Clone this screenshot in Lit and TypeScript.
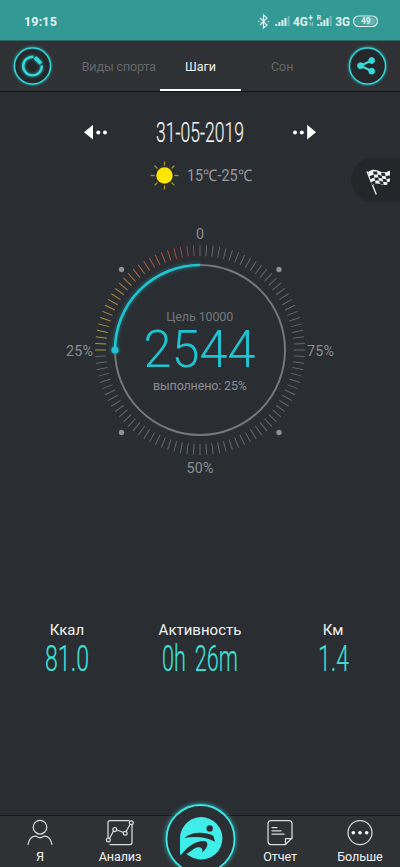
import { LitElement, html, svg, css } from "lit";
import { customElement, property } from "lit/decorators.js";

const TICKS = 100;
const DONE = 25;

function tickColor(i: number): string {
  if (i === 0 || i > DONE) return "#63676c";
  const stops = [[158, 62, 64], [172, 98, 62], [176, 138, 62], [154, 162, 60]];
  const t = ((i - 1) / (DONE - 1)) * 3;
  const k = Math.min(2, Math.floor(t));
  const c = stops[k].map((v, j) => Math.round(v + (stops[k + 1][j] - v) * (t - k)));
  return `rgb(${c.join(",")})`;
}

/* Narrow numerals squeezed to a given width. */
@customElement("slim-text")
class SlimText extends LitElement {
  @property() text = "";
  @property({ type: Number }) width = 80;
  @property({ type: Number }) size = 27;
  @property({ type: Number }) gap = 0;
  static styles = css`
    :host { display: block; }
    svg { display: block; overflow: visible; }
    text { font-family: Roboto, sans-serif; font-weight: 300; fill: currentColor; stroke: currentColor; stroke-width: 0.2; }
  `;
  render() {
    const h = Math.round(this.size * 0.711);
    return html`<svg width=${this.width} height=${h}>
      <text x="0" y=${h} font-size=${this.size} word-spacing=${this.gap} textLength=${this.width} lengthAdjust="spacingAndGlyphs">${this.text}</text>
    </svg>`;
  }
}

@customElement("step-gauge")
class StepGauge extends LitElement {
  static styles = css`
    :host { display: block; width: 280px; height: 260px; }
    svg { display: block; overflow: visible; }
    text { font-family: Roboto, sans-serif; text-anchor: middle; fill: #8b8e91; }
    .mark { font-size: 14.3px; }
    .small { font-size: 12.5px; }
    .goal { fill: #75787b; }
    .big { font-size: 51.5px; font-weight: 300; fill: #20c4d0; }
    .glow { filter: drop-shadow(0 0 2px #17858d); }
  `;
  render() {
    return html`<svg width="280" height="260" viewBox="60 220 280 260">
      ${Array.from({ length: TICKS }, (_, i) => svg`<line x1="200" x2="200" y1="245" y2="256"
        stroke=${tickColor(i)} stroke-width="1" transform="rotate(${-i * 3.6} 200 350)"/>`)}
      ${[[121.5, 269.5], [279, 269.5], [121.5, 432.5], [279, 432.5]].map(
        ([x, y]) => svg`<circle cx=${x} cy=${y} r="2.7" fill="#8d8f92"/>`)}
      <circle cx="200" cy="350" r="85" fill="none" stroke="#74777b" stroke-width="2"/>
      <g class="glow">
        <path d="M200 265A85 85 0 0 0 115 350" fill="none" stroke="#20c4d0" stroke-width="2.6"/>
        <circle cx="115" cy="350" r="3.6" fill="#20c4d0"/>
      </g>
      <text class="mark" x="200" y="239">0</text>
      <text class="mark" x="79.5" y="356.3" textLength="27">25%</text>
      <text class="mark" x="320.5" y="356.3" textLength="27">75%</text>
      <text class="mark" x="200" y="473" textLength="27">50%</text>
      <text class="small goal" x="199.8" y="321" textLength="67">Цель 10000</text>
      <text class="big" x="199.5" y="367" textLength="112" lengthAdjust="spacingAndGlyphs">2544</text>
      <text class="small" x="200" y="390" textLength="94">выполнено: 25%</text>
    </svg>`;
  }
}

@customElement("app-root")
class AppRoot extends LitElement {
  static styles = css`
    :host { display: flex; flex-direction: column; width: 400px; height: 867px; background: #2a2d31; overflow: hidden;
      font-family: Roboto, sans-serif; color: #f2f3f3; }
    svg { display: block; overflow: visible; }
    .status { height: 40px; flex: none; background: #329995; border-bottom: 1px solid #2a6667; display: flex;
      justify-content: space-between; box-sizing: content-box; }
    .clock { margin: 14px 0 0 24px; font-size: 12.5px; line-height: 16px; font-weight: 700; letter-spacing: 0.15px; color: #e6f5f4; }
    .signals text { font-weight: 700; fill: #e0f3f2; }
    .header { height: 50px; flex: none; background: #2f3135; border-bottom: 1px solid #101214; display: flex;
      justify-content: space-between; padding: 0 13px; position: relative; }
    .round { margin-top: 6px; width: 38px; height: 38px; }
    .halo { filter: drop-shadow(0 0 1.5px #20b8ba); }
    .tabs { display: flex; width: 246px; margin-left: 14px; margin-right: 14px; }
    .tab { flex: 1; height: 48px; line-height: 51px; text-align: center; font-size: 12.5px; color: #63666a; border-bottom: 2px solid transparent; white-space: nowrap; }
    .tab.first { padding-left: 1px; letter-spacing: -0.1px; }
    .tab.on { color: #f1f1f1; border-color: #fff; }
    .main { flex: 1; display: flex; flex-direction: column; align-items: center; position: relative; }
    .date { margin-top: 30px; height: 20px; width: 232px; display: flex; align-items: center; justify-content: space-between; }
    .weather { margin-top: 18px; height: 30px; display: flex; align-items: center; gap: 8px; width: 102px; margin-left: 2px; white-space: nowrap; }
    .flag { position: absolute; right: 0; top: 66px; width: 49px; height: 44px; border-radius: 22px 0 0 22px; background: #242629; }
    step-gauge { margin-top: 30px; }
    .metrics { width: 400px; margin-top: 140px; display: grid; grid-template-columns: 134px 132px 134px; }
    .metric { display: flex; flex-direction: column; align-items: center; font-size: 15px; line-height: 20px; }
    .metric slim-text { margin-top: 5px; color: #3be3dc; }
    .nav { height: 51px; flex: none; border-top: 1px solid #15171a; background: #2f3135; display: grid; grid-template-columns: repeat(5, 1fr); position: relative; }
    .item { display: flex; flex-direction: column; align-items: center; font-size: 12.6px; line-height: 16px; padding-top: 3px; white-space: nowrap; }
    .item span { margin-top: 2px; letter-spacing: -0.1px; }
    .center { position: absolute; left: 164px; top: -13px; }
    .ring { filter: drop-shadow(0 0 2.5px #28b4b3); }
  `;

  private item(icon: unknown, label: string) {
    return html`<div class="item"><svg width="28" height="28" viewBox="0 0 28 28" fill="none" stroke="#d9dadb" stroke-width="1.25" stroke-linecap="round" stroke-linejoin="round">${icon}</svg><span>${label}</span></div>`;
  }

  private metric(label: string, value: string, width: number) {
    return html`<div class="metric">${label}<slim-text .text=${value} .width=${width} .size=${36.3} .gap=${6}></slim-text></div>`;
  }

  render() {
    const flagCells: unknown[] = [];
    for (let r = 0; r < 4; r++)
      for (let c = 0; c < 5; c++)
        if ((r + c) % 2 === 1) {
          const y = (k: number) => 14.2 + r * 3 + [1, -0.8, -0.8, 0.6, 1, 0][k];
          const x = 18 + c * 4 + r * 0.7;
          flagCells.push(svg`<path d="M${x} ${y(c)}L${x + 4} ${y(c + 1)}L${x + 4.5} ${y(c + 1) + 3}L${x + 0.7} ${y(c) + 3}Z" fill="#242629"/>`);
        }
    return html`
      <div class="status">
        <div class="clock">19:15</div>
        <svg class="signals" width="142" height="40" viewBox="258 0 142 40">
          <path d="M260 18L267 25L263.5 28V15L267 18L260 25" fill="none" stroke="#e0f3f2" stroke-width="1.2"/>
          <circle cx="258.8" cy="21.5" r=".8" fill="#e0f3f2"/><circle cx="268.4" cy="21.5" r=".8" fill="#e0f3f2"/>
          ${[0, 1, 2, 3, 4].map((i) => svg`
            <rect x=${275.3 + i * 3.05} y=${24 - i * 2} width="2.1" height=${2 + i * 2} fill="#e0f3f2" opacity=${i > 3 ? 0.35 : 0.95}/>
            <rect x=${317.3 + i * 3.05} y=${24 - i * 2} width="2.1" height=${2 + i * 2} fill="#e0f3f2" opacity=${i > 3 ? 0.35 : 0.95}/>`)}
          <text x="293" y="25.8" font-size="12" textLength="14.8" lengthAdjust="spacingAndGlyphs">4G</text>
          <text x="308.3" y="21" font-size="8.5">+</text>
          <path d="M310.2 22v4M312.3 22v4" stroke="#b2dedb" stroke-width=".8"/>
          <text x="316.7" y="20" font-size="6.8">R</text>
          <text x="335.3" y="25.8" font-size="12" textLength="14.8" lengthAdjust="spacingAndGlyphs">3G</text>
          <rect x="353.5" y="16" width="24" height="10.5" rx="5.25" fill="none" stroke="#e0f3f2" stroke-width="1.2"/>
          <path d="M366 17.5h6a3.7 3.7 0 0 1 0 7.4h-6z" fill="#68b6b3"/><rect x="355" y="17.5" width="12" height="7.5" rx="3.7" fill="#46a29f"/>
          <text x="361" y="24.4" font-size="8.6" textLength="9.7" lengthAdjust="spacingAndGlyphs">49</text>
        </svg>
      </div>
      <div class="header">
        <svg class="round" viewBox="0 0 38 38">
          <circle class="halo" cx="19.5" cy="19" r="18" fill="#25282b" stroke="#31d3d4" stroke-width="1.5"/>
          <g class="halo" fill="none" stroke="#36dad9"><path d="M20.5 9.8A9.3 9.3 0 1 0 28.8 18.5" stroke-width="2.3"/>
          <path d="M22 10.5L28 16.5" stroke-width="3.8"/></g>
        </svg>
        <div class="tabs"><div class="tab first">Виды спорта</div><div class="tab on">Шаги</div><div class="tab">Сон</div></div>
        <svg class="round" viewBox="0 0 38 38">
          <circle class="halo" cx="18.5" cy="19" r="18" fill="#25282b" stroke="#31d3d4" stroke-width="1.5"/>
          <g fill="#36dad9" stroke="#36dad9"><path d="M22.7 13.5L11.5 18.7L22.7 24" fill="none" stroke-width="2.2"/>
          <circle cx="22.7" cy="13.5" r="2.9"/><circle cx="11.5" cy="18.7" r="2.9"/><circle cx="22.7" cy="24.2" r="2.9"/></g>
        </svg>
      </div>
      <div class="main">
        <div class="date">
          <svg width="24" height="16" viewBox="0 0 24 16" fill="#fff"><path d="M0 8.2L9 .8V15.6Z"/><circle cx="14.3" cy="8.4" r="2"/><circle cx="21" cy="8.4" r="2"/></svg>
          <slim-text .text=${"31-05-2019"} .width=${88} .size=${27.3}></slim-text>
          <svg width="24" height="16" viewBox="0 0 24 16" fill="#fff"><path d="M24 8.2L15.2 .8V15.6Z"/><circle cx="3" cy="8.4" r="2"/><circle cx="9.8" cy="8.4" r="2"/></svg>
        </div>
        <div class="weather">
          <svg width="29" height="29" viewBox="-14.5 -14.5 29 29">
            <circle r="8.2" fill="#ffe600"/>
            ${Array.from({ length: 8 }, (_, i) => svg`<path d="M0-14V-10" stroke="#a39826" stroke-width="1.3" transform="rotate(${i * 45})"/>`)}
          </svg>
          <svg width="65" height="18"><text x="0" y="14.8" font-size="16" fill="#96999c" textLength="65" lengthAdjust="spacingAndGlyphs">15℃-25℃</text></svg>
        </div>
        <svg class="flag" viewBox="0 0 49 44">
          <path d="M16 13.5L25.3 36.5" stroke="#f3f3f3" stroke-width="1.3"/>
          <path d="M17 14C22 10.5 25 12 29 13.5S35 14.5 39 12.5V25C35 28 32 27 29 26S24 25 21.5 27.5Z" fill="#f3f3f3"/>
          ${flagCells}
        </svg>
        <step-gauge></step-gauge>
        <div class="metrics">
          ${this.metric("Ккал", "81.0", 44)}${this.metric("Активность", "0h 26m", 76)}${this.metric("Км", "1.4", 31)}
        </div>
      </div>
      <div class="nav">
        ${this.item(svg`<circle cx="14" cy="8.2" r="6.8"/><path d="M2 25.5C3 20.5 6 17.2 9.5 17.2C11.5 17.2 11.8 18.7 14 18.7S16.5 17.2 18.5 17.2C22 17.2 25 20.5 26 25.5"/>`, "Я")}
        ${this.item(svg`<path d="M23 1.5H4A2 2 0 0 0 2 3.5V19M4 25.5H24A2 2 0 0 0 26 23.5V6M3.5 19.5L7.5 12M11 11L17.5 13.5M20.3 12.3L24 5.5"/><circle cx="2.3" cy="21" r="1.9"/><circle cx="8.8" cy="10.6" r="1.9"/><circle cx="19.2" cy="14.2" r="1.9"/><circle cx="25.3" cy="3.8" r="1.9"/>`, "Анализ")}
        <div></div>
        ${this.item(svg`<path d="M19 25.5H5A3 3 0 0 1 2 22.5V4.5A3 3 0 0 1 5 1.5H23A3 3 0 0 1 26 4.5V19L19.5 25.5V19.5H26M6 8.5H11M6 11.8H15M6 15.2H18"/>`, "Отчет")}
        ${this.item(svg`<circle cx="14" cy="13.6" r="12"/><g fill="#fff" stroke="none"><circle cx="7.3" cy="13.8" r="1.8"/><circle cx="14" cy="13.8" r="1.8"/><circle cx="20.7" cy="13.8" r="1.8"/></g>`, "Больше")}
        <svg class="center" width="72" height="64" viewBox="0 0 72 64">
          <circle class="ring" cx="36.5" cy="36" r="34" fill="#2b2e32" stroke="#3de7e2" stroke-width="1.8"/>
          <path d="M16 52V35.3A21.2 21.2 0 1 1 25.5 53L20 49.5Z" fill="#40eee9"/>
          <circle cx="45.7" cy="25.4" r="3.2" fill="#2b2e32"/>
          <path d="M20.3 34.9C28 29 39 28.3 49.3 32.7L51 38.7C41 33.3 31 33.2 20.3 34.9Z" fill="#2b2e32"/>
          <path d="M17 52.2C23 43.5 31 38 40 37.9C44.6 38.3 45 43.5 38.3 49.4C39.3 45.2 36.5 43.7 33 44.4C28.5 45.6 26 49.5 22.5 50.8Z" fill="#2b2e32"/>
        </svg>
      </div>`;
  }
}
